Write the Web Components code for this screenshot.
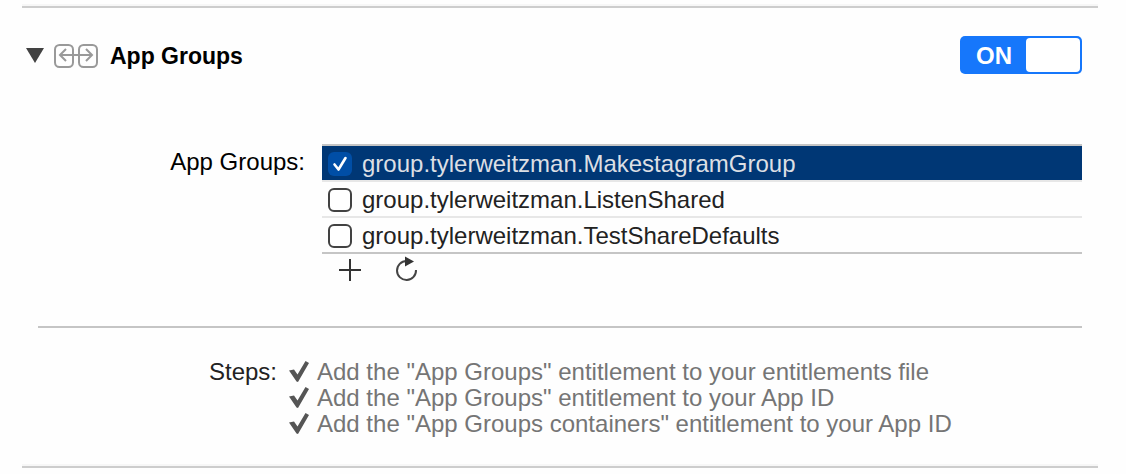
<!DOCTYPE html>
<html lang="en">
<head>
<meta charset="utf-8">
<meta name="viewport" content="width=device-width, initial-scale=1">
<title>Capabilities</title>
<style>
body { margin: 0; background: #fefefe; color: #000; font: 24px/26px "Liberation Sans", Arial, sans-serif; }
</style>
</head>
<body>
<capability-panel>
  <capability-header slot="header">App Groups
    <toggle-switch slot="control">ON</toggle-switch>
  </capability-header>
  <field-row label="App Groups:">
    <group-list>
      <group-item checked>group.tylerweitzman.MakestagramGroup</group-item>
      <group-item>group.tylerweitzman.ListenShared</group-item>
      <group-item>group.tylerweitzman.TestShareDefaults</group-item>
    </group-list>
  </field-row>
  <step-list slot="steps" label="Steps:">
    <step-item>Add the "App Groups" entitlement to your entitlements file</step-item>
    <step-item>Add the "App Groups" entitlement to your App ID</step-item>
    <step-item>Add the "App Groups containers" entitlement to your App ID</step-item>
  </step-list>
</capability-panel>
<script>
const component = (name, render, wire) => customElements.define(name, class extends HTMLElement {
  constructor() {
    super();
    this.attachShadow({ mode: 'open' });
  }
  connectedCallback() {
    if (this.shadowRoot.childNodes.length) return;
    const template = document.createElement('template');
    template.innerHTML = render(this);
    this.shadowRoot.append(template.content.cloneNode(true));
    if (wire) wire(this);
  }
});

component('capability-panel', () => `
  <style>
    :host { display: block; padding: 4px 28px 0 22px; }
    section { border-top: 2px solid #f7f7f7; border-bottom: 2px solid #cdcdcd; }
    .inner { border-top: 2px solid #cdcdcd; border-bottom: 2px solid #f7f7f7; padding: 28px 16px 27px 0; }
    .fields { padding-top: 70px; }
    hr { margin: 40px 0 31px 16px; border: 0; height: 2px; background: #c5c5c5; }
  </style>
  <section><div class="inner">
    <slot name="header"></slot>
    <div class="fields"><slot></slot></div>
    <hr>
    <slot name="steps"></slot>
  </div></section>`);

component('capability-header', () => `
  <style>
    :host { display: flex; align-items: center; height: 38px; }
    button { display: flex; margin: 0 10px 0 4px; padding: 0; border: 0; background: none; }
    h2 { flex: 1; margin: 0 0 0 12px; font-size: 23px; line-height: 26px; padding-top: 2px; font-weight: bold; }
    svg { display: block; }
  </style>
  <button type="button" aria-label="Collapse App Groups" aria-expanded="true">
    <svg width="18" height="16"><path d="M0 1H18L9 16Z" fill="#424242"/></svg>
  </button>
  <svg width="44" height="26" fill="none" stroke="#999" stroke-width="2" aria-hidden="true">
    <rect x="1" y="3" width="18" height="22" rx="4.5"/>
    <rect x="25" y="3" width="18" height="22" rx="4.5"/>
    <path d="M6 13H38M12 7L6 13L12 19M32 7L38 13L32 19"/>
  </svg>
  <h2><slot></slot></h2>
  <slot name="control"></slot>`);

component('toggle-switch', () => `
  <style>
    :host { display: block; }
    button { display: flex; width: 122px; height: 38px; padding: 2px; border: 0; border-radius: 5px;
      background: #1677fb; color: #fff; font: bold 24px/36px "Liberation Sans", Arial, sans-serif; }
    span { flex: 1; text-align: center; }
    i { width: 54px; height: 34px; border-radius: 4px; background: #fff; }
  </style>
  <button type="button" role="switch" aria-checked="true"><span><slot></slot></span><i></i></button>`,
  host => {
    const button = host.shadowRoot.querySelector('button');
    button.onclick = () => button.setAttribute('aria-checked', button.getAttribute('aria-checked') !== 'true');
  });

component('field-row', host => `
  <style>
    :host { display: grid; grid-template-columns: 283px 1fr; column-gap: 17px; }
    .label { padding-top: 5px; text-align: right; }
  </style>
  <div class="label">${host.getAttribute('label')}</div>
  <slot></slot>`);

component('group-list', () => `
  <style>
    :host { display: block; }
    .list { border-top: 2px solid #c5c5c5; border-bottom: 2px solid #c5c5c5; }
    .tools { display: flex; gap: 32px; padding: 2px 0 0 16px; }
    button { display: flex; width: 24px; height: 30px; padding: 0; border: 0; background: none; }
    svg { display: block; }
  </style>
  <div class="list" role="group" aria-label="App Groups"><slot></slot></div>
  <div class="tools">
    <button type="button" aria-label="Add group">
      <svg width="24" height="30"><path d="M1 14H23M12 3V25" stroke="#333" stroke-width="2"/></svg>
    </button>
    <button type="button" aria-label="Refresh groups">
      <svg width="26" height="30"><path d="M12.5 5A9.5 9.5 0 1 0 22 14" fill="none" stroke="#444" stroke-width="2"/><path d="M11 0.5L20 5.5L11 10.5Z" fill="#333"/></svg>
    </button>
  </div>`);

component('group-item', host => `
  <style>
    :host { display: block; border-bottom: 2px solid #e7e7e7; color: #222; }
    :host(:last-child) { border-bottom: 0; }
    :host([checked]) { background: #003775; background-clip: padding-box; color: #dcdfe4; }
    label { display: flex; align-items: center; gap: 10px; height: 34px; padding-left: 6px; }
    .box { display: grid; width: 24px; height: 24px; padding-top: 2px; }
    .name { padding-top: 2px; }
    input, svg { grid-area: 1 / 1; }
    input { appearance: none; box-sizing: border-box; width: 24px; height: 24px; margin: 0;
      border: 2px solid #424242; border-radius: 6px; background: #fff; }
    input:checked { border: 0; background: #004ea6; }
    svg { pointer-events: none; display: none; }
    input:checked + svg { display: block; }
  </style>
  <label>
    <span class="box">
      <input type="checkbox" ${host.hasAttribute('checked') ? 'checked' : ''}>
      <svg width="24" height="24" fill="none" stroke="#fff" stroke-width="2.6" stroke-linecap="round" stroke-linejoin="round"><path d="M6.5 12.5L10.5 17.5L17.5 6"/></svg>
    </span>
    <span class="name"><slot></slot></span>
  </label>`);

component('step-list', host => `
  <style>
    :host { display: grid; grid-template-columns: 255px 1fr; column-gap: 12px; }
    .label { text-align: right; color: #222; }
  </style>
  <div class="label">${host.getAttribute('label')}</div>
  <div role="list"><slot></slot></div>`);

component('step-item', host => `
  <style>
    :host { display: flex; gap: 8px; color: #757575; }
    svg { flex: none; }
  </style>
  <svg width="20" height="26" aria-hidden="true"><path d="M0 11.5L5 10.5L8.5 15.5L16.5 2L20 4L9 23L7.5 22.5Z" fill="#555"/></svg>
  <span><slot></slot></span>`, host => host.setAttribute('role', 'listitem'));
</script>
</body>
</html>
